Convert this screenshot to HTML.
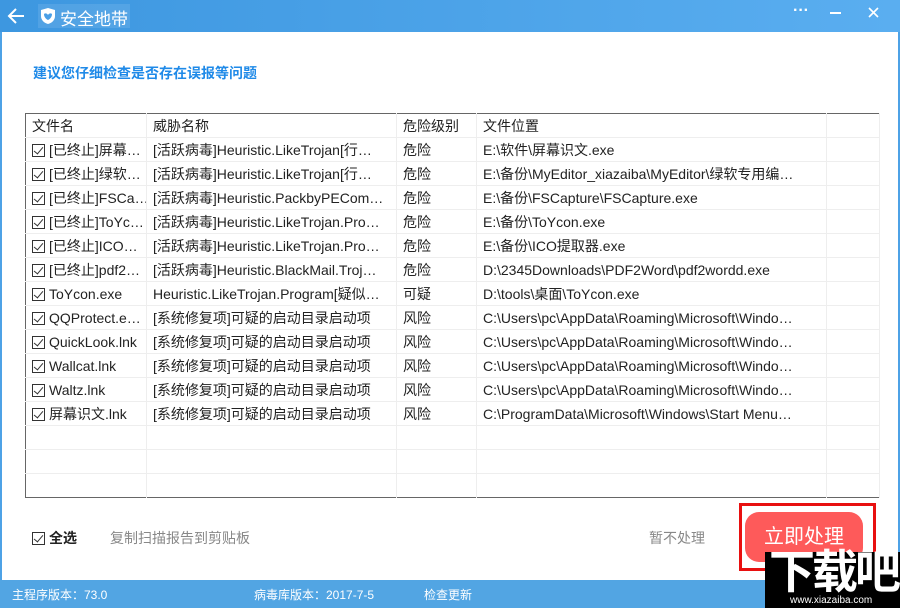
<!DOCTYPE html><html><head><meta charset="utf-8"><style>
*{margin:0;padding:0;box-sizing:border-box}
body{width:900px;height:608px;overflow:hidden;position:relative;background:#fff;font-family:"Liberation Sans","Noto Sans CJK SC",sans-serif;font-size:14px;color:#222}
.title{position:absolute;left:0;top:0;width:900px;height:32px;background:linear-gradient(90deg,#3d97e0,#5aaef0);color:#fff}
.frame{position:absolute;top:32px;bottom:28px;width:2px;background:#4ea2e6}
.status{position:absolute;left:0;top:580px;width:900px;height:28px;background:#52a5e3;color:#fff;font-size:12px}
.status span{position:absolute;top:6px}
table{position:absolute;left:25px;top:113px;width:855px;height:383px;border:1px solid #666;border-collapse:collapse;table-layout:fixed}
td{height:24px;border-right:1px solid #eee;border-top:1px solid #eee;padding-left:6px;white-space:nowrap;overflow:hidden;font-size:14px;line-height:22px}
tr:first-child td{border-top:none}
.cb{display:inline-block;width:13px;height:13px;border:1px solid #333;vertical-align:-2px;margin-right:4px;position:relative}
.cb:after{content:"";position:absolute;left:3px;top:0px;width:4px;height:8px;border:solid #333;border-width:0 1.5px 1.5px 0;transform:rotate(40deg)}
</style></head><body>
<div class="title">
<svg style="position:absolute;left:6px;top:7px" width="20" height="18"><path d="M18 9H3M10 2L3 9l7 7" stroke="#fff" stroke-width="2" fill="none"/></svg>
<div style="position:absolute;left:38px;top:4px;width:92px;height:24px;background:rgba(255,255,255,0.1)"></div>
<svg style="position:absolute;left:40px;top:7px" width="16" height="18"><path d="M8 1L1 3v6c0 4 3 7 7 8 4-1 7-4 7-8V3z" fill="#fff"/><path d="M4 7c0 3 2 5 4 6 2-1 4-3 4-6-1-1-3-1-4 1-1-2-3-2-4-1z" fill="#4a9fe6"/></svg>
<span style="position:absolute;left:60px;top:5px;font-size:17px">安全地带</span>
<span style="position:absolute;left:793px;top:2px;font-size:16px;font-weight:bold">···</span>
<div style="position:absolute;left:830px;top:12px;width:11px;height:2px;background:#fff"></div>
<svg style="position:absolute;left:868px;top:7px" width="11" height="11"><path d="M1 1l9 9M10 1l-9 9" stroke="#fff" stroke-width="1.6"/></svg>
</div>
<div class="frame" style="left:0"></div><div class="frame" style="left:898px"></div>
<div style="position:absolute;left:33px;top:63px;color:#1f8ae8;font-size:14px;font-weight:bold">建议您仔细检查是否存在误报等问题</div>
<table>
<colgroup><col style="width:121px"><col style="width:250px"><col style="width:80px"><col style="width:350px"><col></colgroup>
<tr><td>文件名</td><td>威胁名称</td><td>危险级别</td><td>文件位置</td><td></td></tr>
<tr><td><i class="cb"></i>[已终止]屏幕…</td><td>[活跃病毒]Heuristic.LikeTrojan[行…</td><td>危险</td><td>E:\软件\屏幕识文.exe</td><td></td></tr>
<tr><td><i class="cb"></i>[已终止]绿软…</td><td>[活跃病毒]Heuristic.LikeTrojan[行…</td><td>危险</td><td>E:\备份\MyEditor_xiazaiba\MyEditor\绿软专用编…</td><td></td></tr>
<tr><td><i class="cb"></i>[已终止]FSCa…</td><td>[活跃病毒]Heuristic.PackbyPECom…</td><td>危险</td><td>E:\备份\FSCapture\FSCapture.exe</td><td></td></tr>
<tr><td><i class="cb"></i>[已终止]ToYc…</td><td>[活跃病毒]Heuristic.LikeTrojan.Pro…</td><td>危险</td><td>E:\备份\ToYcon.exe</td><td></td></tr>
<tr><td><i class="cb"></i>[已终止]ICO…</td><td>[活跃病毒]Heuristic.LikeTrojan.Pro…</td><td>危险</td><td>E:\备份\ICO提取器.exe</td><td></td></tr>
<tr><td><i class="cb"></i>[已终止]pdf2…</td><td>[活跃病毒]Heuristic.BlackMail.Troj…</td><td>危险</td><td>D:\2345Downloads\PDF2Word\pdf2wordd.exe</td><td></td></tr>
<tr><td><i class="cb"></i>ToYcon.exe</td><td>Heuristic.LikeTrojan.Program[疑似…</td><td>可疑</td><td>D:\tools\桌面\ToYcon.exe</td><td></td></tr>
<tr><td><i class="cb"></i>QQProtect.e…</td><td>[系统修复项]可疑的启动目录启动项</td><td>风险</td><td>C:\Users\pc\AppData\Roaming\Microsoft\Windo…</td><td></td></tr>
<tr><td><i class="cb"></i>QuickLook.lnk</td><td>[系统修复项]可疑的启动目录启动项</td><td>风险</td><td>C:\Users\pc\AppData\Roaming\Microsoft\Windo…</td><td></td></tr>
<tr><td><i class="cb"></i>Wallcat.lnk</td><td>[系统修复项]可疑的启动目录启动项</td><td>风险</td><td>C:\Users\pc\AppData\Roaming\Microsoft\Windo…</td><td></td></tr>
<tr><td><i class="cb"></i>Waltz.lnk</td><td>[系统修复项]可疑的启动目录启动项</td><td>风险</td><td>C:\Users\pc\AppData\Roaming\Microsoft\Windo…</td><td></td></tr>
<tr><td><i class="cb"></i>屏幕识文.lnk</td><td>[系统修复项]可疑的启动目录启动项</td><td>风险</td><td>C:\ProgramData\Microsoft\Windows\Start Menu…</td><td></td></tr>
<tr><td></td><td></td><td></td><td></td><td></td></tr>
<tr><td></td><td></td><td></td><td></td><td></td></tr>
<tr><td></td><td></td><td></td><td></td><td></td></tr>
</table>
<div style="position:absolute;left:32px;top:528px"><i class="cb"></i><b style="font-size:14px">全选</b></div>
<div style="position:absolute;left:110px;top:528px;color:#888;font-size:14px">复制扫描报告到剪贴板</div>
<div style="position:absolute;left:649px;top:528px;color:#888;font-size:14px">暂不处理</div>
<div style="position:absolute;left:739px;top:503px;width:137px;height:68px;border:3px solid #e81010"></div>
<div style="position:absolute;left:745px;top:512px;width:118px;height:50px;border-radius:14px;background:#fe5a5a;color:#fff;font-size:20px;line-height:50px;text-align:center">立即处理</div>
<div class="status"><span style="left:12px">主程序版本：73.0</span><span style="left:254px">病毒库版本：2017-7-5</span><span style="left:424px">检查更新</span></div>
<div style="position:absolute;left:765px;top:552px;width:135px;height:56px;background:#000;color:#fff">
<div style="position:absolute;left:4px;top:-6px;font-size:46px;font-weight:bold;letter-spacing:-3px;line-height:52px">下载吧</div>
<div style="position:absolute;left:25px;top:43px;font-size:10px">www.xiazaiba.com</div></div>
</body></html>
